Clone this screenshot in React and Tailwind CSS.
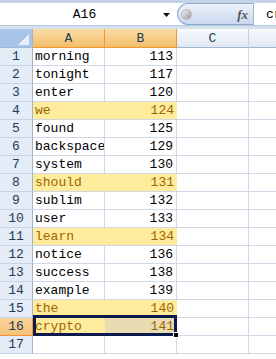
import React from "react";

const data = [
  ["morning", 113, false],
  ["tonight", 117, false],
  ["enter", 120, false],
  ["we", 124, true],
  ["found", 125, false],
  ["backspace", 129, false],
  ["system", 130, false],
  ["should", 131, true],
  ["sublim", 132, false],
  ["user", 133, false],
  ["learn", 134, true],
  ["notice", 136, false],
  ["success", 138, false],
  ["example", 139, false],
  ["the", 140, true],
  ["crypto", 141, true],
  ["", "", false],
];

const mono = { fontFamily: '"Liberation Mono", "DejaVu Sans Mono", monospace' };

export default function App() {
  return (
    <div
      className="w-[276px] h-[359px] overflow-hidden bg-white text-[13px] text-black"
      style={mono}
    >
      {/* top strip */}
      <div className="h-[3px] bg-[#c5d3e6]" />
      {/* formula bar */}
      <div className="h-[22px] flex">
        <div className="w-[177px] flex items-center bg-white">
          <div className="flex-1 text-center leading-[22px] pt-[1px] pl-[6px]">A16</div>
          <svg width="8" height="5" viewBox="0 0 8 5" className="mr-[6px] mt-[2px]">
            <path d="M0 0 H7 L3.5 4 Z" fill="#111" />
          </svg>
        </div>
        <div className="w-[76px] h-[22px] rounded-l-full border border-r-0 border-[#8eaad0] bg-linear-to-b from-[#eef3fa] to-[#c8d8ef] flex items-center justify-between pl-[3px] pr-[5px]">
          <div className="w-[11px] h-[11px] rounded-full bg-linear-to-br from-[#f4f4f4] to-[#9a9a9a] border border-[#b0b7c2]" />
          <span
            className="italic font-bold text-[13px] text-[#555] leading-none"
            style={{ fontFamily: '"Liberation Serif", serif' }}
          >
            fx
          </span>
        </div>
        <div className="flex-1 border-l border-[#a8b8cc] bg-white leading-[22px] pl-[12px] pt-[1px] overflow-hidden whitespace-nowrap">
          crypto
        </div>
      </div>
      {/* gap band */}
      <div className="h-[4px] bg-[#d7e1ee] border-t border-[#b9c9dd]" />
      {/* grid */}
      <div className="relative">
        <div className="grid grid-cols-[33px_72px_72px_72px_27px]">
          {/* header */}
          <div className="h-[19px] bg-[#a9c4e9] border-r border-b border-[#9eb6ce] flex items-end justify-end pr-[3px] pb-[2px]">
            <svg width="11" height="11" viewBox="0 0 11 11">
              <path d="M11 0 V11 H0 Z" fill="#e8eff9" />
            </svg>
          </div>
          {["A", "B"].map((c) => (
            <div
              key={c}
              className="h-[19px] bg-linear-to-b from-[#fbdca4] to-[#f4bf6c] border-r border-b border-[#f29536] text-center leading-[18px] pt-[1px] text-[#1f3a5a]"
            >
              {c}
            </div>
          ))}
          <div className="h-[19px] bg-linear-to-b from-[#f8fafd] to-[#e0e8f3] border-r border-b border-r-[#c3d1e3] border-b-[#9eb6ce] text-center leading-[18px] pt-[1px] text-[#1f3a5a]">
            C
          </div>
          <div className="h-[19px] bg-linear-to-b from-[#f8fafd] to-[#e0e8f3] border-b border-[#9eb6ce]" />

          {data.map(([word, num, hl], i) => {
            const r = i + 1;
            const sel = r === 16;
            const txt = hl ? "text-[#9c6500]" : "text-black";
            return (
              <React.Fragment key={r}>
                <div
                  className={
                    sel
                      ? "h-[18px] bg-linear-to-b from-[#fad49a] to-[#f6c27a] border-r border-b border-[#f29536] text-center leading-[16px] pt-[1px] text-[#1f3a5a]"
                      : "h-[18px] bg-[#e4ecf7] border-r border-b border-r-[#9eb6ce] border-b-[#c5d3e6] text-center leading-[16px] pt-[1px] text-[#1f3a5a]"
                  }
                >
                  {r}
                </div>
                <div
                  className={
                    hl
                      ? `h-[18px] bg-[#ffeb9c] border-b border-b-[#d0d7e5] pl-[2px] leading-[16px] pt-[1px] overflow-hidden whitespace-nowrap ${txt}`
                      : `h-[18px] border-r border-b border-[#d0d7e5] pl-[2px] leading-[16px] pt-[1px] overflow-hidden whitespace-nowrap ${txt}`
                  }
                >
                  {word}
                </div>
                <div
                  className={
                    sel
                      ? `h-[18px] bg-[#e9dcb2] border-b border-b-[#d0d7e5] text-right pr-[3px] leading-[16px] pt-[1px] ${txt}`
                      : hl
                      ? `h-[18px] bg-[#ffeb9c] border-b border-b-[#d0d7e5] text-right pr-[3px] leading-[16px] pt-[1px] ${txt}`
                      : `h-[18px] border-r border-b border-[#d0d7e5] text-right pr-[3px] leading-[16px] pt-[1px] ${txt}`
                  }
                >
                  {num}
                </div>
                <div className="h-[18px] border-r border-b border-[#d0d7e5]" />
                <div className="h-[18px] border-b border-[#d0d7e5]" />
              </React.Fragment>
            );
          })}
        </div>
        {/* selection overlay */}
        <div className="absolute left-[33px] top-[286px] w-[144px] h-[21px] border-[3px] border-[#0c1a4d]" />
        <div className="absolute left-[173px] top-[303px] w-[6px] h-[6px] bg-black border border-white" />
      </div>
    </div>
  );
}
